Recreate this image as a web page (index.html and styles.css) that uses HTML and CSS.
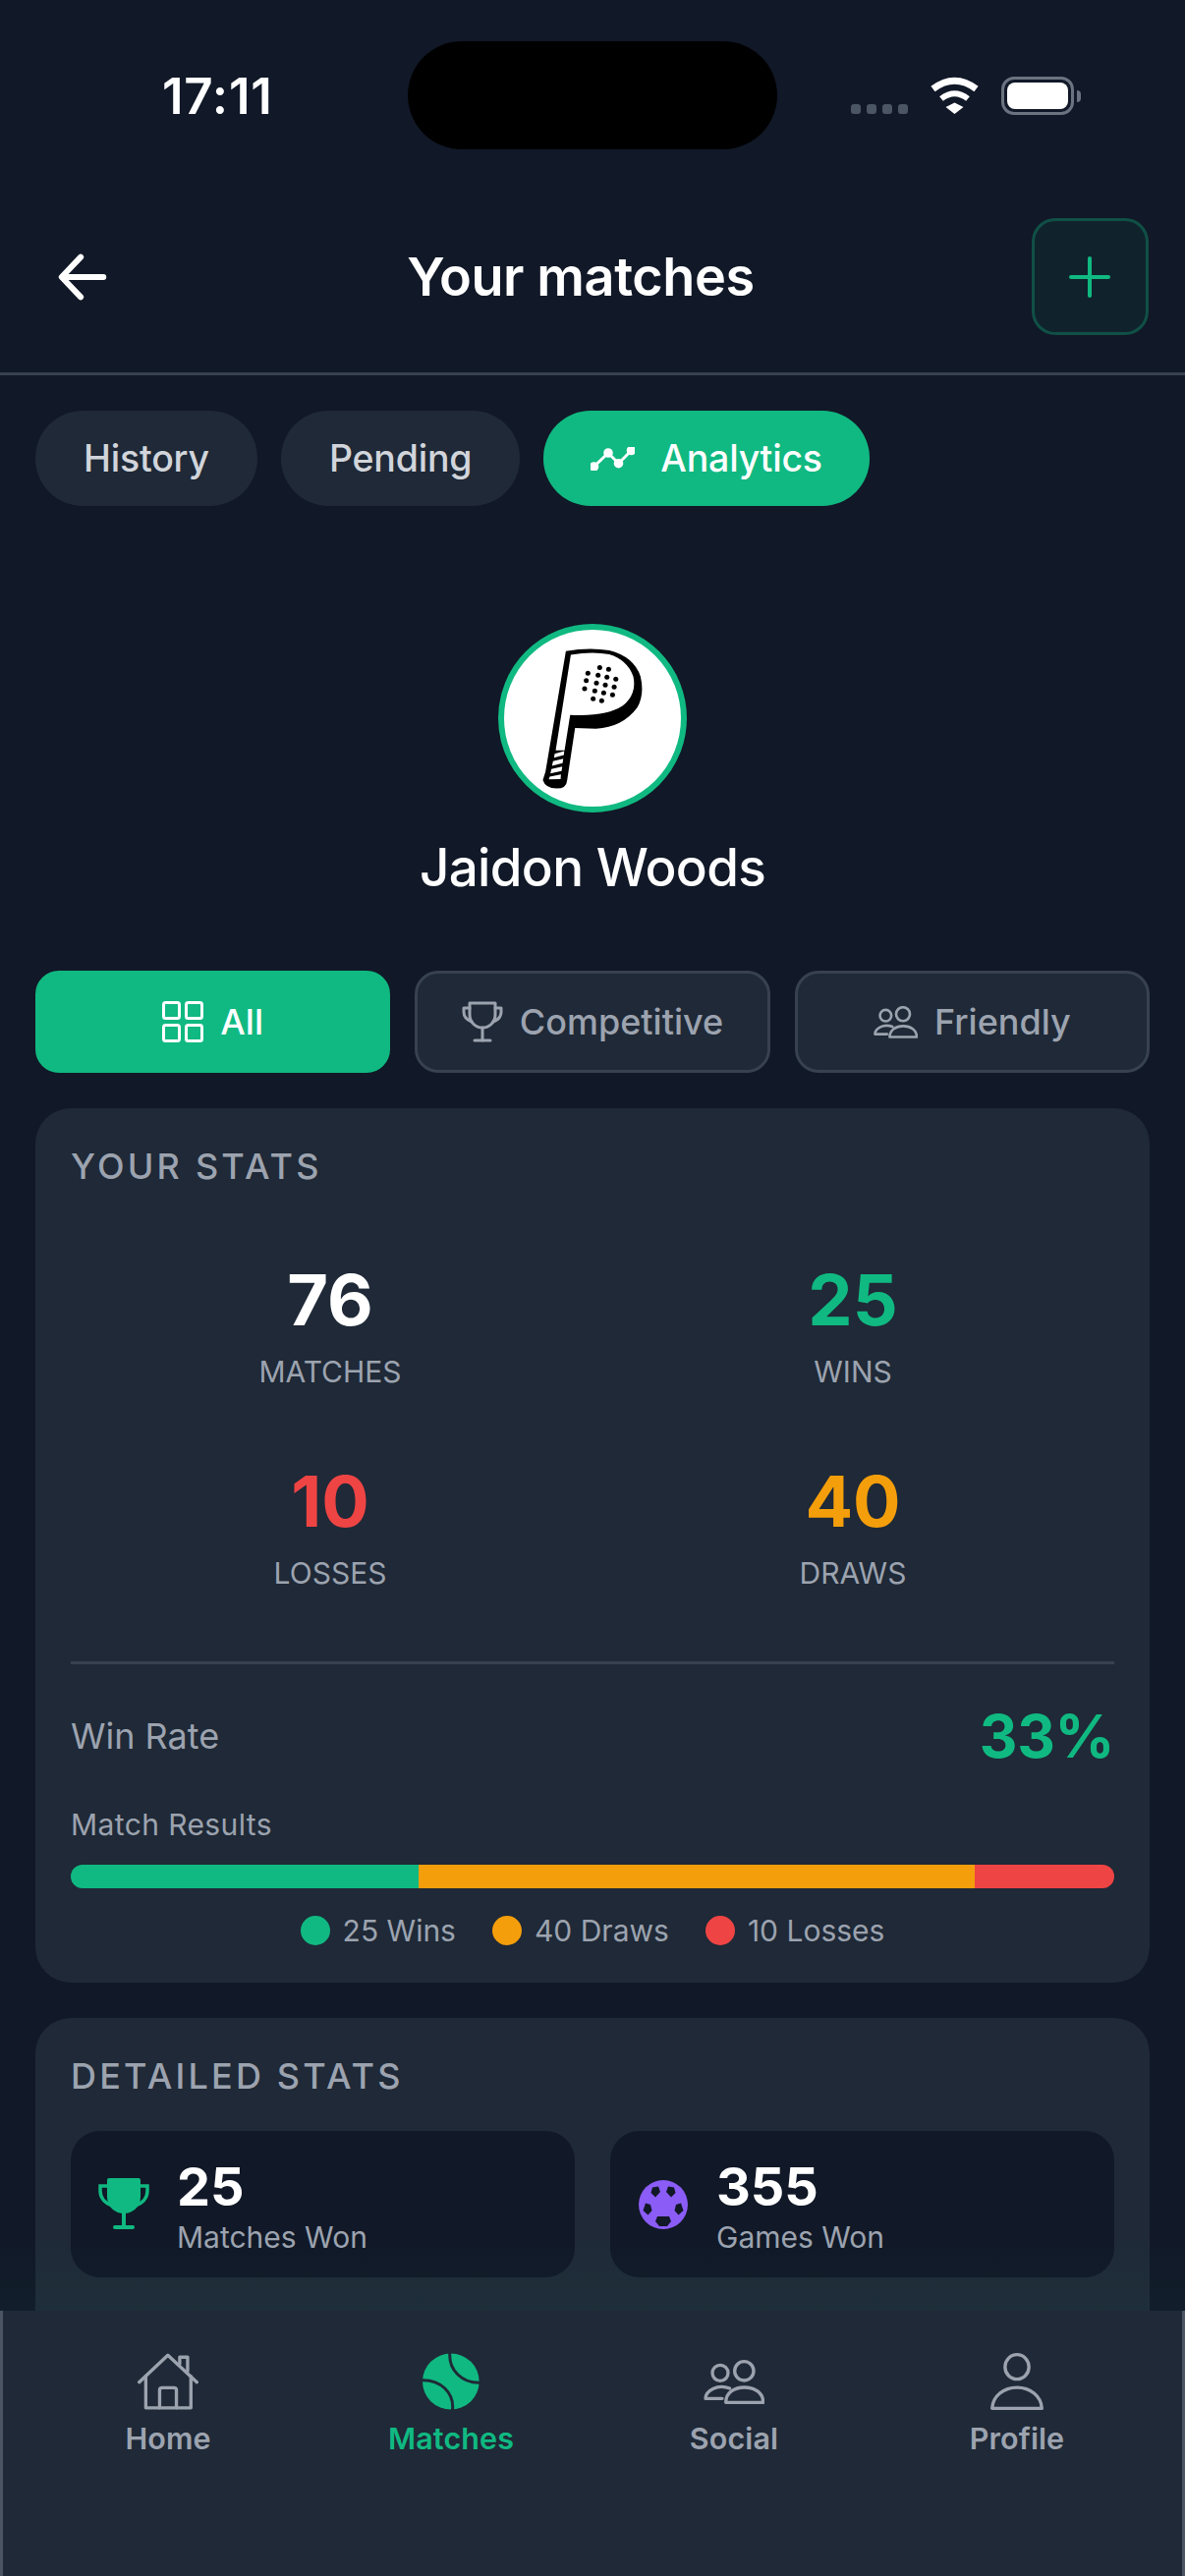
FILE: index.html
```html
<!DOCTYPE html>
<html lang="en">
<head>
    <meta charset="UTF-8">
    <meta name="viewport" content="width=device-width, initial-scale=1.0">
    <title>Your matches</title>
    <link rel="stylesheet" href="styles.css">
</head>
<body>

<div class="screen">
    <div class="island"></div>

    <div class="status-bar">
        <span class="time">17:11</span>
        <div class="status-icons">
            <div class="signal"><i></i><i></i><i></i><i></i></div>
            <svg class="wifi" width="51" height="38" viewBox="0 0 51 38">
                <path d="M3.5 12.5 Q25.5 -4 47.5 12.5" fill="none" stroke="#fff" stroke-width="7"/>
                <path d="M12 22.5 Q25.5 12 39 22.5" fill="none" stroke="#fff" stroke-width="6"/>
                <polygon points="16.5,31 25.5,26.5 34.5,31 25.5,38" fill="#fff"/>
            </svg>
            <div class="battery"><div class="battery-fill"></div></div>
            <div class="battery-tip"></div>
        </div>
    </div>

    <div class="header">
        <div class="back">
            <svg width="50" height="48" viewBox="0 0 54 52" fill="none" stroke="#fff" stroke-width="6.5" stroke-linecap="round" stroke-linejoin="round">
                <path d="M25 4 L4 26 L25 48"/>
                <path d="M5 26 H50"/>
            </svg>
        </div>
        <h1>Your matches</h1>
        <div class="add-btn">
            <svg width="42" height="42" viewBox="0 0 42 42" fill="none" stroke="#10b981" stroke-width="4" stroke-linecap="round">
                <path d="M21 2 V40"/>
                <path d="M2 21 H40"/>
            </svg>
        </div>
    </div>

    <div class="tabs">
        <div class="tab">History</div>
        <div class="tab">Pending</div>
        <div class="tab active">
            <svg width="45" height="24" viewBox="0 0 45 24" fill="none" stroke="#fff" stroke-width="3">
                <path d="M3.5 20 L18 6 L28.5 16.7 L41.5 3.5"/>
                <circle cx="3.5" cy="20" r="3.3" fill="#fff"/>
                <circle cx="18" cy="6" r="3.3" fill="#fff"/>
                <circle cx="28.5" cy="16.7" r="3.3" fill="#fff"/>
                <circle cx="41.5" cy="3.5" r="3.3" fill="#fff"/>
            </svg>
            Analytics
        </div>
    </div>

    <div class="profile">
        <div class="avatar">
            <svg width="180" height="180" viewBox="340 123 538 538">
                <path d="M528 188 Q600 176 660 186 Q735 205 755 265 Q768 320 745 360 Q700 420 620 424 L556 422 L532 580 Q530 606 500 606 Q465 604 458 580 L466 555 Z" fill="#000"/>
                <path d="M543 199 Q610 188 660 198 Q715 215 733 265 Q745 320 700 355 Q650 388 541 382 L524 490 L497 490 Z" fill="#fff"/>
                <path d="M494 500 L523 492 L522 504 L492 512 Z M489 523 L520 515 L518 529 L486 537 Z M484 547 L517 539 L515 553 L481 560 Z M479 570 L513 563 L512 577 L476 578 Z" fill="#fff"/>
                <g fill="#000">
                    <circle cx="595" cy="255" r="7.5"/><circle cx="631" cy="238" r="7.5"/><circle cx="658" cy="243" r="7.5"/>
                    <circle cx="626" cy="261" r="7.5"/><circle cx="653" cy="267" r="7.5"/><circle cx="680" cy="273" r="7.5"/>
                    <circle cx="590" cy="278" r="7.5"/><circle cx="621" cy="285" r="7.5"/><circle cx="648" cy="291" r="7.5"/>
                    <circle cx="675" cy="297" r="7.5"/><circle cx="585" cy="302" r="7.5"/><circle cx="616" cy="309" r="7.5"/>
                    <circle cx="643" cy="315" r="7.5"/><circle cx="670" cy="321" r="7.5"/><circle cx="611" cy="333" r="7.5"/>
                    <circle cx="637" cy="339" r="7.5"/>
                </g>
            </svg>
        </div>
        <div class="name">Jaidon Woods</div>
    </div>

    <div class="filters">
        <div class="filter active">
            <svg width="42" height="42" viewBox="0 0 42 42" fill="none" stroke="#fff" stroke-width="3">
                <rect x="1.5" y="1.5" width="16" height="16" rx="2"/>
                <rect x="24.5" y="1.5" width="16" height="16" rx="2"/>
                <rect x="1.5" y="24.5" width="16" height="16" rx="2"/>
                <rect x="24.5" y="24.5" width="16" height="16" rx="2"/>
            </svg>
            All
        </div>
        <div class="filter">
            <svg width="42" height="42" viewBox="0 0 42 42" fill="none" stroke="#9ca3af" stroke-width="3" stroke-linecap="round" stroke-linejoin="round">
                <path d="M8 2 H34 V14 A13 13 0 0 1 8 14 Z"/>
                <path d="M8 7 H2 V11 C2 16 5 19 10 21"/>
                <path d="M34 7 H40 V11 C40 16 37 19 32 21"/>
                <path d="M21 27 V40"/>
                <path d="M13 40 H29"/>
            </svg>
            Competitive
        </div>
        <div class="filter">
            <svg width="45" height="33" viewBox="78 50 186 136" fill="none" stroke="#9ca3af" stroke-width="11" stroke-linecap="round" stroke-linejoin="round">
                <circle cx="129" cy="90" r="24"/>
                <circle cx="202" cy="84" r="29"/>
                <path d="M146 180 C146 150 172 134 203 134 C234 134 260 150 260 180 Z"/>
                <path d="M135 168 H84 C84 145 120 122 158 137"/>
            </svg>
            Friendly
        </div>
    </div>

    <div class="card stats-card">
        <div class="card-title">YOUR STATS</div>
        <div class="stats-grid">
            <div class="stat">
                <div class="stat-value">76</div>
                <div class="stat-label">MATCHES</div>
            </div>
            <div class="stat">
                <div class="stat-value green">25</div>
                <div class="stat-label">WINS</div>
            </div>
            <div class="stat">
                <div class="stat-value red">10</div>
                <div class="stat-label">LOSSES</div>
            </div>
            <div class="stat">
                <div class="stat-value orange">40</div>
                <div class="stat-label">DRAWS</div>
            </div>
        </div>
        <div class="win-rate">
            <span class="win-label">Win Rate</span>
            <span class="win-value">33%</span>
        </div>
        <div class="results-label">Match Results</div>
        <div class="results-bar">
            <div class="seg bg-green" style="width: 33.33%"></div>
            <div class="seg bg-orange" style="width: 53.33%"></div>
            <div class="seg bg-red" style="width: 13.34%"></div>
        </div>
        <div class="legend">
            <div class="legend-item"><span class="dot bg-green"></span>25 Wins</div>
            <div class="legend-item"><span class="dot bg-orange"></span>40 Draws</div>
            <div class="legend-item"><span class="dot bg-red"></span>10 Losses</div>
        </div>
    </div>

    <div class="card detail-card">
        <div class="card-title">DETAILED STATS</div>
        <div class="detail-grid">
            <div class="detail">
                <div class="detail-icon">
                    <svg width="52" height="53" viewBox="0 0 52 53">
                        <path d="M11 0 H41 Q43 0 43 2 V19 C43 30 34 36 26 36 C18 36 9 30 9 19 V2 Q9 0 11 0 Z" fill="#10b981"/>
                        <path d="M10 8 H2 V13 C2 21 8 26 14 28 M42 8 H50 V13 C50 21 44 26 38 28" fill="none" stroke="#10b981" stroke-width="3.5"/>
                        <path d="M26 34 V50 M17 50 H35" fill="none" stroke="#10b981" stroke-width="4" stroke-linecap="round"/>
                    </svg>
                </div>
                <div class="detail-text">
                    <div class="detail-value">25</div>
                    <div class="detail-label">Matches Won</div>
                </div>
            </div>
            <div class="detail">
                <div class="detail-icon">
                    <svg width="50" height="50" viewBox="0 0 50 50">
                        <circle cx="25" cy="25" r="25" fill="#8b5cf6"/>
                        <g fill="#111827">
                            <polygon points="14,7.5 20,6.5 22,12 17,17.5 12.5,13"/>
                            <polygon points="30,6.5 36,7.5 37.5,13 33,17.5 28,12"/>
                            <polygon points="7,23.5 12,25 13.5,31 9.5,35.5 4.5,31"/>
                            <polygon points="43,23.5 45.5,31 40.5,35.5 36.5,31 38,25"/>
                            <polygon points="19,37 31,37 33,42 29,47 21,47 17,42"/>
                        </g>
                    </svg>
                </div>
                <div class="detail-text">
                    <div class="detail-value">355</div>
                    <div class="detail-label">Games Won</div>
                </div>
            </div>
        </div>
    </div>

    <div class="nav-fade"></div>

    <div class="bottom-nav">
        <div class="nav-item">
            <svg width="62" height="58" viewBox="60 30 185 172" fill="none" stroke="#9ca3af" stroke-width="10" stroke-linecap="round" stroke-linejoin="round">
                <path d="M65 118 L152 36 L240 118"/>
                <path d="M85 100 V196 H222 V100"/>
                <path d="M127 196 V142 Q127 135 135 135 H170 Q178 135 178 142 V196"/>
                <path d="M188 62 V42 H212 V85"/>
            </svg>
            <span>Home</span>
        </div>
        <div class="nav-item active">
            <svg width="58" height="58" viewBox="930 30 175 172">
                <ellipse cx="1017" cy="116" rx="87" ry="86" fill="#10b981"/>
                <path d="M1014 28 C1010 80 1050 122 1108 120" fill="none" stroke="#1f2937" stroke-width="9"/>
                <path d="M928 112 C985 110 1028 150 1022 204" fill="none" stroke="#1f2937" stroke-width="9"/>
            </svg>
            <span>Matches</span>
        </div>
        <div class="nav-item">
            <svg width="62" height="58" viewBox="78 30 186 172" fill="none" stroke="#9ca3af" stroke-width="10" stroke-linecap="round" stroke-linejoin="round">
                <circle cx="129" cy="90" r="24"/>
                <circle cx="202" cy="84" r="29"/>
                <path d="M146 180 C146 150 172 134 203 134 C234 134 260 150 260 180 Z"/>
                <path d="M135 168 H84 C84 145 120 122 158 137"/>
            </svg>
            <span>Social</span>
        </div>
        <div class="nav-item">
            <svg width="54" height="58" viewBox="955 30 160 172" fill="none" stroke="#9ca3af" stroke-width="10" stroke-linejoin="round">
                <ellipse cx="1035" cy="72" rx="36" ry="37"/>
                <path d="M960 197 C962 160 995 134 1035 134 C1075 134 1108 160 1110 197 Z"/>
            </svg>
            <span>Profile</span>
        </div>
    </div>
</div>

</body>
</html>
```

FILE: styles.css
```css
body {
    margin: 0;
    background-color: #111827;
    font-family: Inter, "Noto Sans", sans-serif;
    color: #fff;
}
.screen {
    position: relative;
    width: 1206px;
    height: 2622px;
    overflow: hidden;
    background-color: #111827;
}

/* status bar */
.island {
    position: absolute;
    left: 415px;
    top: 42px;
    width: 376px;
    height: 110px;
    border-radius: 55px;
    background-color: #000;
}
.status-bar {
    display: flex;
    align-items: flex-start;
    justify-content: space-between;
    height: 222px;
    padding: 0 106px 0 165px;
    box-sizing: border-box;
}
.time {
    margin-top: 68px;
    font-size: 51px;
    line-height: 60px;
    font-weight: 600;
    letter-spacing: 0.8px;
}
.status-icons {
    display: flex;
    align-items: flex-end;
    margin-top: 78px;
    height: 39px;
}
.signal {
    display: flex;
    gap: 6px;
    margin-right: 22px;
    margin-bottom: 1px;
}
.signal i {
    display: block;
    width: 10px;
    height: 10px;
    border-radius: 3px;
    background-color: #4b5563;
}
.wifi {
    margin-right: 22px;
    margin-bottom: 1px;
}
.battery {
    width: 74px;
    height: 39px;
    padding: 3px;
    box-sizing: border-box;
    border: 3px solid #6b7280;
    border-radius: 13px;
}
.battery-fill {
    height: 100%;
    border-radius: 8px;
    background-color: #fff;
}
.battery-tip {
    width: 4px;
    height: 12px;
    margin: 0 0 13px 3px;
    border-radius: 0 4px 4px 0;
    background-color: #6b7280;
}

/* header */
.header {
    display: flex;
    align-items: center;
    justify-content: space-between;
    height: 119px;
    padding: 0 37px 38px 36px;
    border-bottom: 3px solid #374151;
}
.back {
    display: flex;
    align-items: center;
    justify-content: center;
    width: 96px;
    height: 96px;
}
.header h1 {
    margin: 0;
    font-size: 54px;
    font-weight: 600;
    letter-spacing: -0.4px;
}
.add-btn {
    display: flex;
    align-items: center;
    justify-content: center;
    width: 119px;
    height: 119px;
    box-sizing: border-box;
    border: 3px solid rgba(16, 185, 129, 0.3);
    border-radius: 24px;
    background-color: rgba(16, 185, 129, 0.07);
}

/* tabs */
.tabs {
    display: flex;
    gap: 24px;
    margin-top: 36px;
    padding: 0 36px;
}
.tab {
    display: flex;
    align-items: center;
    gap: 26px;
    height: 97px;
    padding: 0 49px;
    border-radius: 48px;
    background-color: #1f2937;
    color: #d1d5db;
    font-size: 37.5px;
    font-weight: 500;
    letter-spacing: -0.2px;
}
.tab.active {
    padding: 0 48px;
    background-color: #10b981;
    color: #fff;
}

/* profile */
.profile {
    display: flex;
    flex-direction: column;
    align-items: center;
    margin-top: 120px;
}
.avatar {
    display: flex;
    align-items: center;
    justify-content: center;
    width: 192px;
    height: 192px;
    box-sizing: border-box;
    border: 6px solid #10b981;
    border-radius: 50%;
    background-color: #fff;
}
.name {
    margin-top: 24px;
    font-size: 53px;
    line-height: 64px;
    font-weight: 500;
    letter-spacing: -0.7px;
}

/* filters */
.filters {
    display: grid;
    grid-template-columns: repeat(3, 1fr);
    gap: 25px;
    margin-top: 73px;
    padding: 0 36px;
}
.filter {
    display: flex;
    align-items: center;
    justify-content: center;
    gap: 17px;
    height: 104px;
    box-sizing: border-box;
    border: 3px solid #374151;
    border-radius: 24px;
    background-color: #1f2937;
    color: #9ca3af;
    font-size: 36px;
    font-weight: 500;
}
.filter.active {
    border-color: #10b981;
    background-color: #10b981;
    color: #fff;
}

/* cards */
.card {
    margin: 36px 36px 0;
    padding: 36px;
    border-radius: 36px;
    background-color: #1f2937;
}
.card-title {
    font-size: 36px;
    line-height: 46px;
    font-weight: 500;
    letter-spacing: 3.2px;
    color: #9ca3af;
}
.stats-grid {
    display: grid;
    grid-template-columns: 528px 528px;
    gap: 68px 4px;
    margin-top: 69px;
}
.stat {
    text-align: center;
}
.stat-value {
    font-size: 72px;
    line-height: 88px;
    font-weight: 700;
}
.stat-label {
    margin-top: 9px;
    font-size: 30px;
    line-height: 40px;
    color: #9ca3af;
}
.green { color: #10b981; }
.red { color: #ef4444; }
.orange { color: #f59e0b; }
.bg-green { background-color: #10b981; }
.bg-red { background-color: #ef4444; }
.bg-orange { background-color: #f59e0b; }

.win-rate {
    display: flex;
    align-items: center;
    justify-content: space-between;
    margin-top: 70px;
    padding-top: 37px;
    border-top: 3px solid #374151;
}
.win-label {
    font-size: 36px;
    color: #9ca3af;
}
.win-value {
    font-size: 60px;
    line-height: 72px;
    font-weight: 700;
    letter-spacing: -0.4px;
    color: #10b981;
}
.results-label {
    margin-top: 34px;
    font-size: 30px;
    line-height: 40px;
    letter-spacing: 0.4px;
    color: #9ca3af;
}
.results-bar {
    display: flex;
    height: 24px;
    margin-top: 21px;
    border-radius: 12px;
    overflow: hidden;
}
.seg {
    height: 100%;
}
.legend {
    display: flex;
    justify-content: center;
    gap: 37px;
    margin-top: 23px;
    margin-bottom: -3px;
}
.legend-item {
    display: flex;
    align-items: center;
    gap: 13px;
    font-size: 30px;
    line-height: 40px;
    color: #9ca3af;
}
.dot {
    width: 30px;
    height: 30px;
    border-radius: 50%;
}

.detail-card {
    min-height: 420px;
}
.detail-grid {
    display: grid;
    grid-template-columns: 1fr 1fr;
    gap: 36px;
    margin-top: 33px;
}
.detail {
    display: flex;
    align-items: center;
    gap: 24px;
    height: 149px;
    padding-left: 24px;
    border-radius: 30px;
    background-color: #111827;
}
.detail-icon {
    display: flex;
    justify-content: center;
    width: 60px;
}
.detail-text {
    padding-top: 4px;
}
.detail-value {
    font-size: 54px;
    line-height: 62px;
    font-weight: 700;
}
.detail-label {
    font-size: 30px;
    line-height: 40px;
    color: #9ca3af;
}

/* bottom nav */
.nav-fade {
    position: absolute;
    left: 0;
    right: 0;
    top: 2272px;
    height: 80px;
    background: linear-gradient(rgba(16, 185, 129, 0), rgba(16, 185, 129, 0.04));
}
.bottom-nav {
    position: absolute;
    left: 0;
    right: 0;
    bottom: 0;
    display: grid;
    grid-template-columns: repeat(4, 288px);
    height: 270px;
    padding: 43px 24px 0;
    box-sizing: border-box;
    border-left: 3px solid #4b5563;
    border-right: 3px solid #4b5563;
    background-color: #1f2937;
}
.nav-item {
    display: flex;
    flex-direction: column;
    align-items: center;
    color: #9ca3af;
    font-size: 30.5px;
    font-weight: 600;
    letter-spacing: 0.1px;
}
.nav-item span {
    margin-top: 9px;
    line-height: 40px;
}
.nav-item.active {
    color: #10b981;
}
```
